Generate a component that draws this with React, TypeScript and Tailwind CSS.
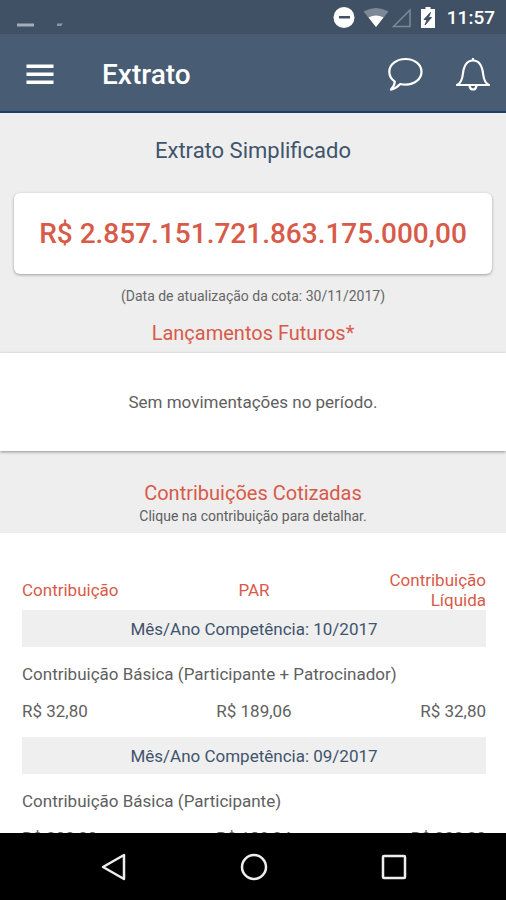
import type { ReactNode } from 'react';

const contribuicoes = [
  {
    competencia: '10/2017',
    descricao: 'Contribuição Básica (Participante + Patrocinador)',
    valores: ['R$ 32,80', 'R$ 189,06', 'R$ 32,80'],
  },
  {
    competencia: '09/2017',
    descricao: 'Contribuição Básica (Participante)',
    valores: ['R$ 200,00', 'R$ 189,24', 'R$ 200,00'],
  },
];

function StatusBar() {
  return (
    <div className="flex h-[34px] shrink-0 items-center justify-between bg-[#405165] pr-[11px] pl-4 text-white">
      <svg width="48" height="34" viewBox="0 0 48 34" aria-hidden="true">
        <rect x="1" y="23.500" width="17" height="3" fill="#a4adb8" />
        <path d="M41 23.500h6l-2 2.500h-4z" fill="#8b97a5" />
      </svg>
      <div className="flex items-center pt-0.5">
        <svg width="114" height="34" viewBox="0 0 114 34" aria-hidden="true">
          <circle cx="11" cy="16.500" r="10.500" fill="#fff" />
          <rect x="6" y="15" width="11" height="2.500" fill="#405165" />
          <path d="M30.500 10.500q12.500-7 25 0L43 26z" fill="#7d8997" />
          <path d="M35.500 16.500q7.500-4 15 0L43 26z" fill="#fff" />
          <path d="M60.500 25.500 77 9V25.500z" fill="none" stroke="#7d8997" strokeWidth="1.500" />
          <path d="M92.500 6h5v2h4.500v19H88V8h4.500z" fill="#fff" />
          <path d="M97.500 11.500 91 18.500h3.200L92 24l6.500-7.500h-3z" fill="#405165" stroke="#405165" />
        </svg>
        <span className="text-[19px] leading-6 font-medium">11:57</span>
      </div>
    </div>
  );
}

function IconButton({ label, children }: { label: string; children: ReactNode }) {
  return (
    <button type="button" aria-label={label} className="flex size-9 items-center justify-center">
      {children}
    </button>
  );
}

function Header() {
  return (
    <header className="flex h-[79px] shrink-0 items-center border-b-2 border-[#1c3f66] bg-[#485c73] pt-1 pr-[15px] pl-[22px] text-white">
      <IconButton label="Menu">
        <svg width="28" height="22" viewBox="0 0 28 22" fill="#fff">
          <rect x="0.500" y="0.500" width="27" height="3.500" />
          <rect x="0.500" y="8.500" width="27" height="3.500" />
          <rect x="0.500" y="16.500" width="27" height="3.500" />
        </svg>
      </IconButton>
      <h1 className="ml-11 flex-1 text-[28px] leading-8 font-medium">Extrato</h1>
      <div className="flex gap-8">
        <IconButton label="Mensagens">
          <svg width="36" height="36" viewBox="0 0 36 36" fill="none" stroke="#fff" strokeWidth="2.200" strokeLinejoin="round">
            <path d="M18.500 2c9 0 16 5.500 16 12.800s-7 12.800-16 12.800q-2.800 0-5.300-.6-3.800 4.300-9.200 5.600 3.500-3.500 3.800-8C4.400 22.300 2.300 19 2.300 14.800 2.300 7.500 9.500 2 18.500 2z" />
          </svg>
        </IconButton>
        <IconButton label="Notificações">
          <svg width="36" height="36" viewBox="0 0 36 36" fill="none" stroke="#fff" strokeWidth="2.200" strokeLinejoin="round">
            <path d="M2 28h32c-3-1.500-5.200-5-5.800-10.500C27.300 9 24 3.500 18 3.500S8.700 9 7.800 17.500C7.200 23 5 26.500 2 28z" />
            <path d="M14.500 28.500q.5 4 3.500 4t3.500-4M18 1v2.500" />
          </svg>
        </IconButton>
      </div>
    </header>
  );
}

function Contribuicoes() {
  return (
    <table className="w-full table-fixed text-[17px] leading-5 text-[#606060]">
      <thead>
        <tr className="h-10 text-[#d85a49]">
          <th className="text-left font-normal">Contribuição</th>
          <th className="text-center font-normal">PAR</th>
          <th className="pl-8 text-right font-normal">Contribuição Líquida</th>
        </tr>
      </thead>
      {contribuicoes.map((item) => (
        <tbody key={item.competencia}>
          <tr className="h-[37px] bg-[#efefef] text-[#3f546d]">
            <th colSpan={3} className="text-center font-normal">
              Mês/Ano Competência: {item.competencia}
            </th>
          </tr>
          <tr>
            <td colSpan={3} className="pt-[17px]">
              {item.descricao}
            </td>
          </tr>
          <tr>
            <td className="pt-[17px] pb-4">{item.valores[0]}</td>
            <td className="pt-[17px] pb-4 text-center">{item.valores[1]}</td>
            <td className="pt-[17px] pb-4 text-right">{item.valores[2]}</td>
          </tr>
        </tbody>
      ))}
    </table>
  );
}

function NavigationBar() {
  return (
    <nav className="flex h-[67px] shrink-0 items-center justify-center gap-[104px] bg-black pl-0.5">
      <IconButton label="Voltar">
        <svg width="30" height="30" viewBox="0 0 30 30" fill="none" stroke="#eee" strokeWidth="2.500" strokeLinejoin="round">
          <path d="M25 3v24L4 15z" />
        </svg>
      </IconButton>
      <IconButton label="Início">
        <svg width="30" height="30" viewBox="0 0 30 30" fill="none" stroke="#eee" strokeWidth="2.500">
          <circle cx="15" cy="15" r="12" />
        </svg>
      </IconButton>
      <IconButton label="Recentes">
        <svg width="30" height="30" viewBox="0 0 30 30" fill="none" stroke="#eee" strokeWidth="2.500">
          <rect x="4" y="4" width="22" height="22" rx="1" />
        </svg>
      </IconButton>
    </nav>
  );
}

export default function App() {
  return (
    <div className="flex h-screen flex-col overflow-hidden bg-[#eee] font-['Roboto',sans-serif]">
      <StatusBar />
      <Header />
      <main className="flex-1 overflow-hidden">
        <section className="px-[14px] pt-6 text-center">
          <h2 className="text-[22px] leading-7 text-[#3f546d]">Extrato Simplificado</h2>
          <div className="mt-7 rounded-md bg-white pt-[25px] pb-6 text-[28px] leading-8 font-medium text-[#d85a49] shadow-[0_1px_3px_rgba(0,0,0,0.35)]">
            R$ 2.857.151.721.863.175.000,00
          </div>
          <p className="mt-3 text-sm leading-5 text-[#666]">(Data de atualização da cota: 30/11/2017)</p>
        </section>

        <section className="pt-[13px] text-center">
          <h2 className="text-xl leading-7 text-[#d85a49]">Lançamentos Futuros*</h2>
          <p className="mt-1.5 bg-white py-[39px] text-[17px] leading-5 text-[#606060] shadow-[0_1px_3px_rgba(0,0,0,0.4)]">
            Sem movimentações no período.
          </p>
        </section>

        <section className="pt-7">
          <div className="pb-2 text-center">
            <h2 className="text-xl leading-7 text-[#d85a49]">Contribuições Cotizadas</h2>
            <p className="text-sm leading-[18px] text-[#606060]">Clique na contribuição para detalhar.</p>
          </div>
          <div className="bg-white pt-[37px] pr-5 pl-[22px]">
            <Contribuicoes />
          </div>
        </section>
      </main>
      <NavigationBar />
    </div>
  );
}
